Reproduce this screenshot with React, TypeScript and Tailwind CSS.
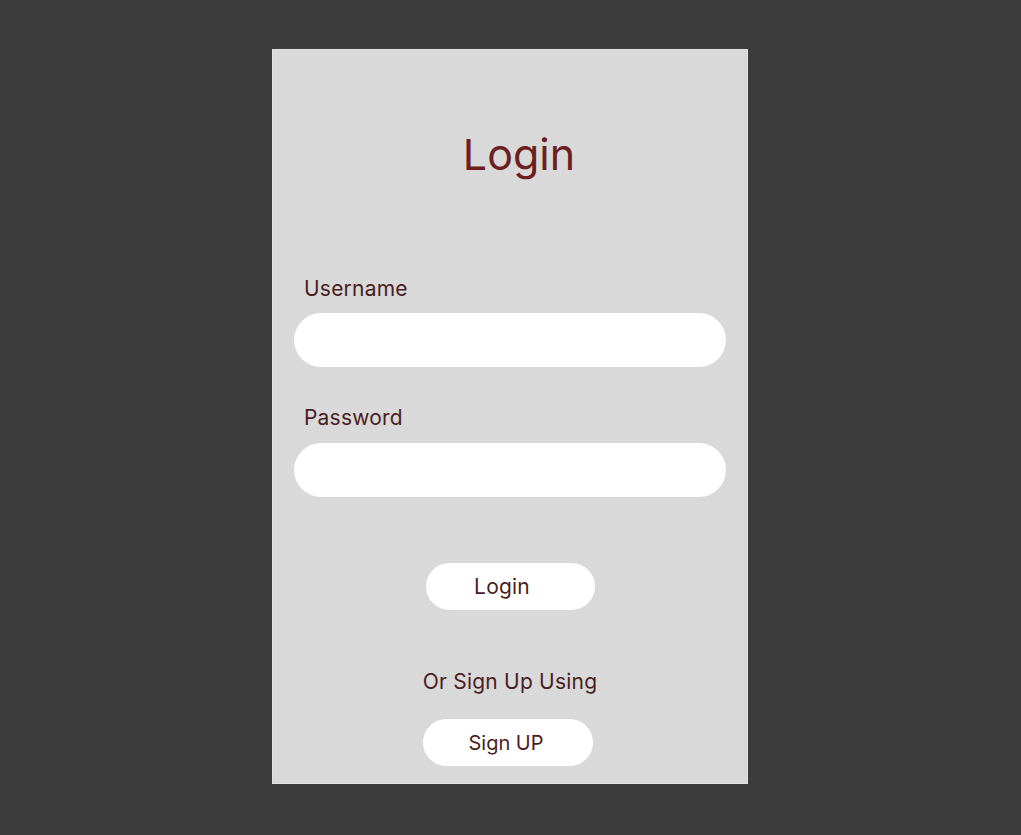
export default function App() {
  return (
    <div
      className="flex min-h-[835px] w-full justify-center bg-[#3c3c3c] pt-[49px] pr-px"
      style={{ fontFamily: "Inter, 'Noto Sans', sans-serif" }}
    >
      <div className="flex h-[735px] w-[476px] flex-col border border-[#e3e3e3] bg-[#d9d9d9] px-[21px]">
        <h1 className="mt-[83px] pl-[18px] text-center text-[43px] leading-none font-normal text-[#6d1e21]">
          Login
        </h1>

        <label className="mt-[102px] pl-[10px] text-[21px] leading-none tracking-[0.01em] text-[#4a1d22]">
          Username
        </label>
        <input
          type="text"
          className="mt-[14px] h-[54px] w-full rounded-full bg-white px-6 outline-none"
        />

        <label className="mt-[40px] pl-[10px] text-[21px] leading-none tracking-[0.01em] text-[#4a1d22]">
          Password
        </label>
        <input
          type="password"
          className="mt-[15px] h-[54px] w-full rounded-full bg-white px-6 outline-none"
        />

        <button className="mx-auto mt-[66px] flex h-[47px] w-[169px] items-center justify-center rounded-full bg-white pr-4 text-[21px] leading-none tracking-[0.01em] text-[#4a1d22]">
          Login
        </button>

        <p className="mt-[61px] text-center text-[21px] leading-none tracking-[0.01em] text-[#4a1d22]">
          Or Sign Up Using
        </p>

        <button className="mx-auto mt-[27px] flex h-[47px] w-[170px] -translate-x-[2px] items-center justify-center rounded-full bg-white pr-1 text-[20px] leading-none text-[#4a1d22]">
          Sign UP
        </button>
      </div>
    </div>
  );
}
